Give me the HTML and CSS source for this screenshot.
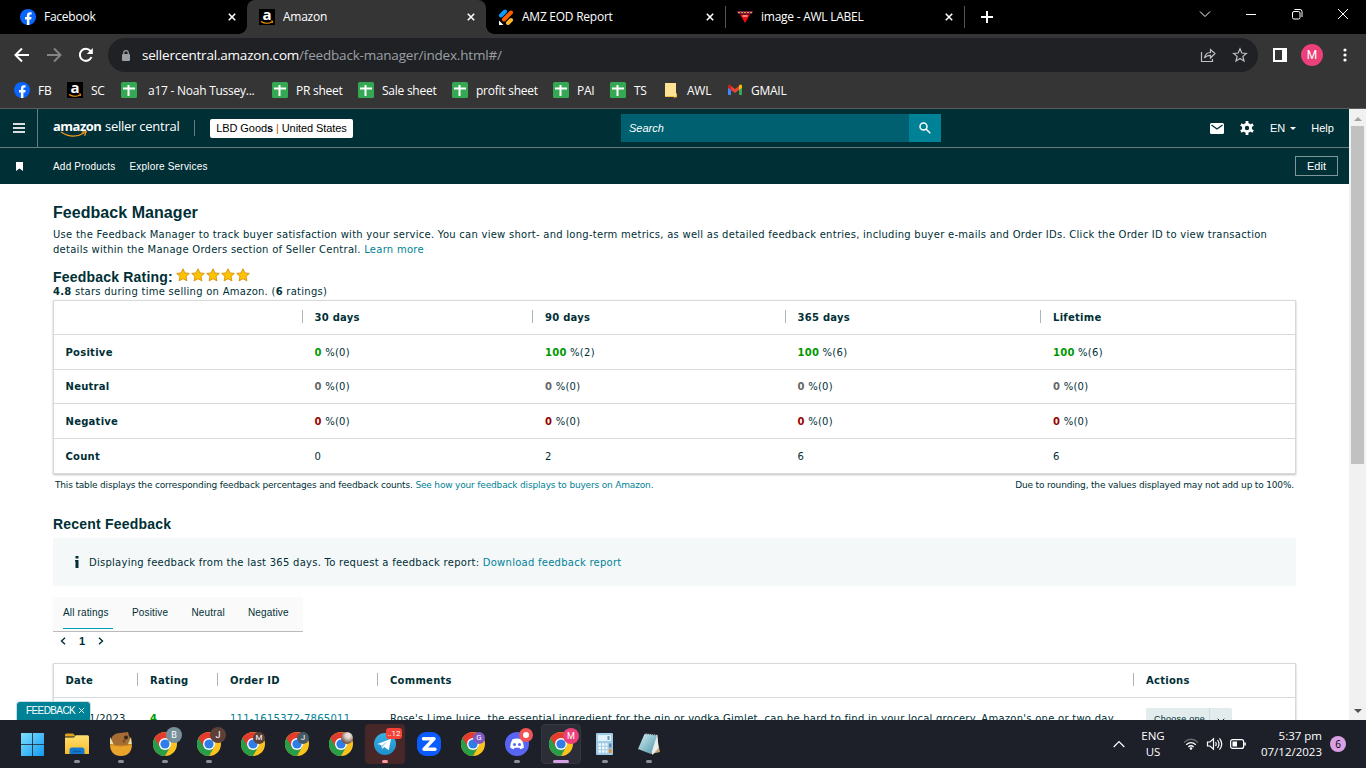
FILE: index.html
```
<!DOCTYPE html>
<html lang="en">

<head>
    <meta charset="utf-8">
    <title>Amazon</title>
    <link rel="stylesheet" href="styles.css">
</head>

<body>

    <!-- shared icons -->
    <svg class="defs" width="0" height="0">
        <defs>
            <linearGradient id="gWin" x1="0" y1="0" x2="1" y2="1">
                <stop offset="0" stop-color="#7fe0ff" />
                <stop offset="1" stop-color="#1399f0" />
            </linearGradient>
            <linearGradient id="gFolder" x1="0" y1="0" x2="0" y2="1">
                <stop offset="0" stop-color="#ffdf70" />
                <stop offset="1" stop-color="#f9bc2a" />
            </linearGradient>
            <linearGradient id="gNote" x1="0" y1="0" x2="1" y2="1">
                <stop offset="0" stop-color="#d5f0f4" />
                <stop offset="1" stop-color="#4b93a6" />
            </linearGradient>
            <linearGradient id="gTel" x1="0" y1="0" x2="0" y2="1">
                <stop offset="0" stop-color="#38b0e3" />
                <stop offset="1" stop-color="#1d8fcb" />
            </linearGradient>
        </defs>
        <symbol id="fb" viewBox="0 0 16 16">
            <circle cx="8" cy="8" r="8" fill="#0866ff" />
            <path d="M6.9 16V10.4H5V8h1.9V6.7c0-2.3 1.1-3.4 3.2-3.4.5 0 1.1.1 1.5.2v2.1h-1c-.9 0-1.2.4-1.2 1.300V8h2.200l-.4 2.400H9.400V16z" fill="#fff" />
        </symbol>
        <symbol id="amz" viewBox="0 0 16 16">
            <rect width="16" height="16" fill="#000" />
            <text x="8" y="10.6" text-anchor="middle" font-family="Open Sans, sans-serif" font-weight="700" font-size="15" fill="#fff">a</text>
            <path d="M2 12.4q5.500 3.400 11 .6" fill="none" stroke="#f90" stroke-width="1.2" />
            <path d="M11.800 12h2l-.5 2" fill="none" stroke="#f90" stroke-width=".9" />
        </symbol>
        <symbol id="sheet" viewBox="0 0 16 16">
            <rect width="16" height="16" rx="1.5" fill="#34a853" />
            <path d="M2 6.500h12M7.500 3v11" stroke="#fff" stroke-width="2" />
        </symbol>
        <symbol id="close" viewBox="0 0 8 8">
            <path d="M.8.800l6.400 6.400M7.200.800L.8 7.200" stroke="#fff" stroke-width="1.6" />
        </symbol>
        <symbol id="chrome" viewBox="0 0 24 24">
            <circle cx="12" cy="12" r="12" fill="#fcc31e" />
            <path d="M12 12L1.600 6A12 12 0 0 0 12 24L17.200 15z" fill="#2a9d48" />
            <path d="M6.800 15L1.600 6A12 12 0 0 1 22.400 6.500H12z" fill="#e33b2e" />
            <circle cx="12" cy="12" r="6" fill="#fff" />
            <circle cx="12" cy="12" r="4.6" fill="#2f7de9" />
        </symbol>
        <symbol id="star" viewBox="0 0 14 14">
            <path d="M7 .8l1.900 4.100 4.400.500-3.300 3 .9 4.500L7 10.700l-3.900 2.200.9-4.500-3.300-3 4.400-.500z" fill="#ffc400" stroke="#d58f0a" stroke-width=".9" />
        </symbol>
    </svg>

    <div class="tabs">
        <div class="tab">
            <svg class="fav"><use href="#fb" /></svg>
            <span class="tabTitle">Facebook</span>
            <svg class="x"><use href="#close" /></svg>
        </div>
        <div class="tab active">
            <svg class="fav"><use href="#amz" /></svg>
            <span class="tabTitle">Amazon</span>
            <svg class="x"><use href="#close" /></svg>
        </div>
        <div class="tab">
            <svg class="fav" viewBox="0 0 16 16">
                <path d="M3 6.500L7 2.500" stroke="#0a9bff" stroke-width="4" stroke-linecap="round" />
                <path d="M6 10.500L13 3.500" stroke="#ff6100" stroke-width="4" stroke-linecap="round" />
                <path d="M10 14l3-3" stroke="#ffb629" stroke-width="4" stroke-linecap="round" />
                <path d="M1 11.500V16h4.500z" fill="#fff" />
            </svg>
            <span class="tabTitle">AMZ EOD Report</span>
            <svg class="x"><use href="#close" /></svg>
        </div>
        <div class="tab last">
            <svg class="fav" viewBox="0 0 16 16">
                <path d="M0 2h16l-1 3H1z" fill="#7b2340" />
                <path d="M1 3.500h14" stroke="#d39a4a" stroke-dasharray="2 1" />
                <path d="M3 5.500h10L8 14z" fill="#f20d0d" />
                <path d="M5.500 7h5" stroke="#fff" />
            </svg>
            <span class="tabTitle">image - AWL LABEL</span>
            <svg class="x"><use href="#close" /></svg>
        </div>
        <svg class="plus" viewBox="0 0 12 12"><path d="M6 0v12M0 6h12" stroke="#fff" stroke-width="2" /></svg>
        <div class="winButtons">
            <svg viewBox="0 0 12 12"><path d="M1 3.500l5 5 5-5" /></svg>
            <svg viewBox="0 0 12 12"><path d="M1 6.500h10" /></svg>
            <svg viewBox="0 0 12 12"><rect x="1.5" y="3.5" width="7.5" height="7.5" rx="1.5" /><path d="M3.500 1.500H9a2 2 0 0 1 2 2V9" /></svg>
            <svg viewBox="0 0 12 12"><path d="M1 1l10 10M11 1L1 11" /></svg>
        </div>
    </div>

    <div class="toolbar">
        <svg class="nav" viewBox="0 0 16 16"><path d="M15 8H2M8 1.500L1.500 8 8 14.500" stroke="#fff" /></svg>
        <svg class="nav" viewBox="0 0 16 16"><path d="M1 8h13M8 1.500L14.500 8 8 14.500" stroke="#858585" /></svg>
        <svg class="nav" viewBox="0 0 16 16"><path d="M13.500 10A6 6 0 1 1 12.500 4l1 1.500" stroke="#fff" /><path d="M14.800 1v6H8.800z" fill="#fff" /></svg>
        <div class="omnibox">
            <svg class="lock" viewBox="0 0 8 11"><rect y="4" width="8" height="7" rx="1" fill="#9aa0a6" /><path d="M1.700 5V3a2.300 2.300 0 0 1 4.600 0v2" fill="none" stroke="#9aa0a6" stroke-width="1.2" /></svg>
            <span class="url"><b>sellercentral.amazon.com</b>/feedback-manager/index.html#/</span>
            <svg class="share" viewBox="0 0 16 16"><path d="M1.500 5v9.500h11V12M4.500 11c.5-3.500 2.500-5.500 6-5.500V2.500L15 6.500 10.500 11V8.300c-2.500 0-4.500.7-6 2.700z" /></svg>
            <svg class="fave" viewBox="0 0 16 16"><path d="M8 1.800l1.800 4.200 4.600.4-3.500 3 1.100 4.500L8 11.500l-4 2.400 1.100-4.500-3.500-3 4.600-.4z" /></svg>
        </div>
        <svg class="side" viewBox="0 0 14 14"><path d="M0 0h14v14H0zM2 2v10h7V2z" fill="#fff" fill-rule="evenodd" /></svg>
        <span class="profile">M</span>
        <svg class="dots" viewBox="0 0 4 14"><circle cx="2" cy="2" r="1.6" /><circle cx="2" cy="7" r="1.6" /><circle cx="2" cy="12" r="1.6" /></svg>
    </div>

    <div class="bookmarks">
        <span><svg><use href="#fb" /></svg>FB</span>
        <span><svg><use href="#amz" /></svg>SC</span>
        <span class="wide"><svg><use href="#sheet" /></svg>a17 - Noah Tussey...</span>
        <span><svg><use href="#sheet" /></svg>PR sheet</span>
        <span><svg><use href="#sheet" /></svg>Sale sheet</span>
        <span><svg><use href="#sheet" /></svg>profit sheet</span>
        <span><svg><use href="#sheet" /></svg>PAI</span>
        <span><svg><use href="#sheet" /></svg>TS</span>
        <span><svg viewBox="0 0 16 16"><path d="M2 1h11v10l1 1v3H2z" fill="#fde293" /><path d="M2 14.500h9M13.500 12v3h-3" stroke="#f0c040" fill="none" /></svg>AWL</span>
        <span><svg viewBox="0 0 16 16"><path d="M1 4v9h3V7z" fill="#4285f4" /><path d="M12 7v6h3V4z" fill="#34a853" /><path d="M4 4v4l4 3 4-3V4L8 7z" fill="#ea4335" /><path d="M1 4.500V4a1.500 1.500 0 0 1 3 0v4L1 5.800z" fill="#c5221f" /><path d="M15 4.500V4a1.500 1.500 0 0 0-3 0v4l3-2.200z" fill="#fbbc04" /></svg>GMAIL</span>
    </div>

    <div class="window">
        <div class="page">
            <div class="topbar">
                <div class="burger"><i></i><i></i><i></i></div>
                <div class="logo">
                    <b>amazon</b><span>seller central</span>
                    <svg class="smile" viewBox="0 0 30 7"><path d="M1 1q12 8 24 1" /><path d="M22.500 1l4.500-.3-1.500 4" /></svg>
                </div>
                <div class="account">LBD Good<b>s</b> <em>|</em> United States</div>
                <div class="search">
                    <span>Search</span>
                    <div class="go"><svg viewBox="0 0 12 12"><circle cx="4.5" cy="4.5" r="3.5" /><path d="M7 7l4.300 4.300" /></svg></div>
                </div>
                <svg class="mail" viewBox="0 0 14 11"><rect width="14" height="11" rx="1.5" fill="#fff" /><path d="M1.500 2L7 6l5.500-4" fill="none" stroke="#002f36" stroke-width="1.3" /></svg>
                <svg class="gear" viewBox="0 0 14 14"><circle cx="7" cy="7" r="3.6" /><path d="M7 0v3M7 11v3M.9 3.500l2.600 1.500M10.500 9l2.600 1.500M.9 10.500L3.500 9M10.500 5l2.600-1.500" /></svg>
                <span class="lang">EN</span><i class="caret"></i>
                <span class="help">Help</span>
            </div>
            <div class="subbar">
                <svg class="mark" viewBox="0 0 7 9"><path d="M0 0h7v9L3.500 6.500 0 9z" fill="#fff" /></svg>
                <span class="add">Add Products</span>
                <span class="explore">Explore Services</span>
                <span class="edit">Edit</span>
            </div>

            <div class="content">
                <h1>Feedback Manager</h1>
                <p class="intro">Use the Feedback Manager to track buyer satisfaction with your service. You can view short- and long-term metrics, as well as detailed feedback entries, including buyer e-mails and Order IDs. Click the Order ID to view transaction<br>details within the Manage Orders section of Seller Central. <a>Learn more</a></p>

                <div class="rating">
                    <h2>Feedback Rating:</h2>
                    <svg><use href="#star" /></svg><svg><use href="#star" /></svg><svg><use href="#star" /></svg><svg><use href="#star" /></svg><svg><use href="#star" /></svg>
                </div>
                <p class="stars"><b>4.8</b> stars during time selling on Amazon. (<b>6</b> ratings)</p>

                <div class="box summary">
                    <div class="row head"><span></span><span>30 days</span><span>90 days</span><span>365 days</span><span>Lifetime</span></div>
                    <div class="row pos"><strong>Positive</strong><span><b>0</b> %(0)</span><span><b>100</b> %(2)</span><span><b>100</b> %(6)</span><span><b>100</b> %(6)</span></div>
                    <div class="row neu"><strong>Neutral</strong><span><b>0</b> %(0)</span><span><b>0</b> %(0)</span><span><b>0</b> %(0)</span><span><b>0</b> %(0)</span></div>
                    <div class="row neg"><strong>Negative</strong><span><b>0</b> %(0)</span><span><b>0</b> %(0)</span><span><b>0</b> %(0)</span><span><b>0</b> %(0)</span></div>
                    <div class="row total"><strong>Count</strong><span>0</span><span>2</span><span>6</span><span>6</span></div>
                </div>
                <div class="notes">
                    <span>This table displays the corresponding feedback percentages and feedback counts. <a>See how your feedback displays to buyers on Amazon.</a></span>
                    <span>Due to rounding, the values displayed may not add up to 100%.</span>
                </div>

                <h2 class="recent">Recent Feedback</h2>
                <div class="info">
                    <svg viewBox="0 0 4 12"><path d="M.5 0h3v2.500h-3zM0 4h3.500v8H.5V5.500H0z" fill="#002f36" /></svg>
                    <span>Displaying feedback from the last 365 days. To request a feedback report: <a>Download feedback report</a></span>
                </div>

                <div class="filters">
                    <span class="on">All ratings</span><span>Positive</span><span>Neutral</span><span>Negative</span>
                </div>
                <div class="pager">
                    <svg viewBox="0 0 6 8"><path d="M5 .7L1.500 4 5 7.300" /></svg>
                    <span>1</span>
                    <svg viewBox="0 0 6 8"><path d="M1 .7L4.500 4 1 7.300" /></svg>
                </div>

                <div class="box entries">
                    <div class="row head"><span>Date</span><span>Rating</span><span>Order ID</span><span>Comments</span><span>Actions</span></div>
                    <div class="row"><span>11/21/2023</span><span class="score">4</span><span><a>111-1615372-7865011</a></span><span>Rose's Lime Juice, the essential ingredient for the gin or vodka Gimlet, can be hard to find in your local grocery. Amazon's one or two day</span>
                        <div class="choose"><span>Choose one</span><svg viewBox="0 0 8 5"><path d="M.7.700L4 4 7.300.700" /></svg></div>
                    </div>
                </div>
            </div>
            <div class="feedbackTag">FEEDBACK <svg viewBox="0 0 8 8"><path d="M1 1l6 6M7 1L1 7" stroke="#fff" /></svg></div>
        </div>
        <div class="scroll"><i class="up"></i><div class="thumb"></div><i class="down"></i></div>
    </div>

    <div class="taskbar">
        <div class="app"><svg viewBox="0 0 24 24"><path d="M0 1h11.200v11H0zM12 1h11v11H12zM0 12.800h11.200V24H0zM12 12.800h11V24H12z" fill="url(#gWin)" /></svg></div>
        <div class="app run"><svg viewBox="0 0 24 24"><path d="M0 3a1.500 1.500 0 0 1 1.500-1.500H8l3 3H0z" fill="#e0a31a" /><path d="M0 5.500h9l2-2.200h11.500A1.500 1.500 0 0 1 24 4.800V22H0z" fill="url(#gFolder)" /><path d="M4.500 22v-4a2.500 2.500 0 0 1 2.500-2.500h10a2.500 2.500 0 0 1 2.500 2.500v4z" fill="#137ad0" /><path d="M8 19.500h8" stroke="#0c5ba8" stroke-width="1.5" /></svg></div>
        <div class="app run"><svg viewBox="0 0 24 24"><path d="M2 14V9c0-5 4-8 9-8l8-1 1 4c2 2 2 5 2 10z" fill="#a56c33" /><path d="M1 5l4 8H1zM22 5l1 8-4-1z" fill="#e9e2a5" /><circle cx="17" cy="5.500" r="2" fill="#3b241a" /><circle cx="15" cy="9" r="1.500" fill="#7b4a26" /><path d="M1 12q11 3 22 0c0 8-4 12-11 12S1 20 1 12z" fill="#e9a52b" /><path d="M1 12.500q11 3 22 0" fill="none" stroke="#c47d1c" /></svg></div>
        <div class="app run"><svg><use href="#chrome" /></svg><em class="big slate">B</em></div>
        <div class="app run"><svg><use href="#chrome" /></svg><em class="big brown">J</em></div>
        <div class="app"><svg><use href="#chrome" /></svg><em class="brown">M</em></div>
        <div class="app"><svg><use href="#chrome" /></svg><em class="dark">J</em></div>
        <div class="app"><svg><use href="#chrome" /></svg><em class="photo"></em></div>
        <div class="app run alert"><svg viewBox="0 0 24 24"><circle cx="12" cy="12" r="11" fill="url(#gTel)" /><path d="M4.500 12L18 6.800l-2.200 11.500-4.500-3.300-2.300 2-.5-3.800z" fill="#fff" /><path d="M8.500 13.500l6-4.500-4.500 5.500-.9 2.500z" fill="#a9d5ee" /></svg><em class="count">..12</em></div>
        <div class="app"><svg viewBox="0 0 24 24"><rect width="24" height="24" rx="9" fill="#0b5cff" /><path d="M6.500 6.800h10.500L7 17.200h11" fill="none" stroke="#fff" stroke-width="3.4" stroke-linejoin="round" stroke-linecap="round" /></svg></div>
        <div class="app"><svg><use href="#chrome" /></svg><em class="violet">G</em></div>
        <div class="app run"><svg viewBox="0 0 24 24"><circle cx="12" cy="12" r="12" fill="#5865f2" /><path d="M7.500 7.200Q12 6 16.500 7.200q2.500 4 2.400 8.300-1.500 1.200-3.500 1.700l-1-1.500h-4.800l-1 1.500q-2-.5-3.500-1.700 0-4.300 2.400-8.300z" fill="#fff" /><circle cx="9.500" cy="12.500" r="1.500" fill="#5865f2" /><circle cx="14.500" cy="12.500" r="1.500" fill="#5865f2" /></svg><em class="rec"></em></div>
        <div class="app run current"><svg><use href="#chrome" /></svg><em class="big pink">M</em></div>
        <div class="app run"><svg viewBox="0 0 24 24"><rect x="3" y="1" width="17" height="22" rx="1" fill="#9fcbe6" /><rect x="5" y="3" width="13" height="6" fill="#e2f2fb" /><path d="M14.500 4h2v4h-2z" fill="#7595b0" /><path d="M5.500 12.500h9M5.500 16h9M5.500 19.500h9" stroke="#f3fafd" stroke-width="2.4" stroke-dasharray="2.5 1" /><path d="M16 11.500h2.500v4H16z" fill="#5f88a8" /><path d="M16 17h2.500v4H16z" fill="#e58b32" /></svg></div>
        <div class="app run"><svg viewBox="0 0 24 24"><path d="M19 2l4 18-9 2z" fill="#c9a77a" /><path d="M8 1.500L20.500 3 21.500 16l-6 7z" fill="#e8eeee" /><path d="M7.500 2L20 3.500 14 22 1 17z" fill="url(#gNote)" /><path d="M8 1.500l12 1.500" stroke="#39434a" stroke-width="1.5" stroke-dasharray="1 1" /></svg></div>

        <div class="tray">
            <svg class="chev" viewBox="0 0 12 8"><path d="M.7 7L6 1.500 11.300 7" /></svg>
            <span class="kb">ENG<br>US</span>
            <svg class="wifi" viewBox="0 0 16 12"><path d="M1 4.500q7-6.500 14 0" stroke="#666b72" /><path d="M3.200 6.800q4.800-4.500 9.600 0M5.300 9q2.700-2.500 5.400 0" /><circle cx="8" cy="10.500" r="1.300" fill="#fff" stroke="none" /></svg>
            <svg class="vol" viewBox="0 0 16 14"><path d="M1 5h2.500L7 1.800v10.400L3.500 9H1zM9 5q1.500 2 0 4M11 3q3 4 0 8M13 1.300q4.500 5.700 0 11.400" /></svg>
            <svg class="bat" viewBox="0 0 16 10"><rect x=".6" y=".6" width="13" height="8.8" rx="2" /><rect x="2.5" y="2.5" width="4.5" height="5" fill="#fff" stroke="none" /><path d="M15 3.500v3" stroke-width="1.6" /></svg>
            <span class="clock">5:37 pm<br>07/12/2023</span>
            <span class="badge">6</span>
        </div>
    </div>

</body>

</html>
```
FILE: styles.css
```
* {
    box-sizing: border-box;
}

body {
    margin: 0;
    width: 1366px;
    height: 768px;
    overflow: hidden;
    display: flex;
    flex-direction: column;
    background: #fff;
    font-family: "Open Sans", "Noto Sans", sans-serif;
    font-size: 12px;
}

svg {
    display: block;
    flex: none;
}

.defs {
    position: absolute;
}

h1, h2, p {
    margin: 0;
}

em, i {
    font-style: normal;
}

/* browser tabs */
.tabs {
    display: flex;
    height: 34px;
    background: #000;
    color: #fff;
}

.tab {
    width: 239px;
    height: 34px;
    padding: 0 11px 0 12px;
    display: flex;
    align-items: center;
}

.tab:first-child {
    width: 247px;
    padding-left: 20px;
}

.tab.active {
    position: relative;
    background: #353535;
    border-radius: 8px 8px 0 0;
}

.tab.active::before, .tab.active::after {
    content: "";
    position: absolute;
    left: -8px;
    bottom: 0;
    width: 8px;
    height: 8px;
    background: radial-gradient(circle at 0 0, transparent 7.5px, #353535 8px);
}

.tab.active::after {
    left: auto;
    right: -8px;
    background: radial-gradient(circle at 100% 0, transparent 7.5px, #353535 8px);
}

.tab.last {
    width: 240px;
    border-left: 1px solid #444;
    border-right: 1px solid #444;
    border-image: linear-gradient(transparent 7px, #555 7px, #555 27px, transparent 27px) 1;
    padding-left: 11px;
}

.fav {
    width: 16px;
    height: 16px;
    margin-right: 8px;
}

.tabTitle {
    flex: 1;
    line-height: 34px;
    letter-spacing: -0.25px;
}

.x {
    width: 8px;
    height: 8px;
}

.plus {
    width: 12px;
    height: 12px;
    margin: 11px 0 0 16px;
}

.winButtons {
    display: flex;
    gap: 34px;
    margin: 8px 0 0 auto;
    padding-right: 17px;
}

.winButtons svg {
    width: 12px;
    height: 12px;
    fill: none;
    stroke: #fff;
}

/* address bar */
.toolbar {
    display: flex;
    align-items: center;
    height: 42px;
    padding-left: 14px;
    background: #353535;
}

.nav {
    width: 16px;
    height: 16px;
    margin-right: 16px;
    fill: none;
    stroke-width: 2;
}

.omnibox {
    display: flex;
    align-items: center;
    width: 1150px;
    height: 34px;
    margin-left: -2px;
    padding-left: 14px;
    border-radius: 17px;
    background: #202124;
    color: #9aa0a6;
}

.lock {
    width: 8px;
    height: 11px;
}

.url {
    flex: 1;
    margin-left: 12px;
    font-size: 13.5px;
    letter-spacing: -0.2px;
}

.url b {
    font-weight: 400;
    color: #fff;
}

.share, .fave {
    width: 16px;
    height: 16px;
    margin-right: 16px;
    fill: none;
    stroke: #bdc1c6;
    stroke-width: 1.2;
}

.fave {
    margin-right: 10px;
}

.side {
    width: 14px;
    height: 14px;
    margin-left: 15px;
}

.profile {
    width: 22px;
    height: 22px;
    margin-left: 14px;
    border-radius: 50%;
    background: #ec407a;
    color: #fff;
    font: 12px/22px Roboto, sans-serif;
    text-align: center;
}

.dots {
    width: 4px;
    height: 14px;
    margin-left: 20px;
    fill: #fff;
}

.bookmarks {
    display: grid;
    grid-template-columns: 53px 54px 151px 86px 94px 101px 57px 53px 64px 100px;
    height: 33px;
    padding: 0 0 4px 14px;
    background: #353535;
    border-bottom: 1px solid #5c5c5c;
    color: #fff;
    letter-spacing: -0.25px;
}

.bookmarks span {
    display: flex;
    align-items: center;
    white-space: nowrap;
}

.bookmarks svg {
    width: 16px;
    height: 16px;
    margin-right: 8px;
}

.bookmarks .wide svg {
    margin-right: 11px;
}

/* seller central */
.window {
    display: flex;
    height: 611px;
}

.page {
    position: relative;
    width: 1349px;
    overflow: hidden;
    font-family: "DejaVu Sans", sans-serif;
    font-size: 10px;
    letter-spacing: 0.26px;
    color: #002f36;
}

.page a {
    color: #008296;
}

.topbar {
    display: flex;
    align-items: center;
    height: 39px;
    background: #002f36;
    border-bottom: 1px solid #687c7e;
    color: #fff;
    font: 12px "Liberation Sans", Arial, sans-serif;
    letter-spacing: 0;
}

.burger {
    display: flex;
    flex-direction: column;
    justify-content: center;
    gap: 2px;
    width: 38px;
    height: 38px;
    padding-left: 13px;
    border-right: 1px solid #687c7e;
}

.burger i {
    width: 12px;
    height: 2px;
    background: #d9e0e1;
}

.logo {
    position: relative;
    display: flex;
    width: 142px;
    height: 16px;
    margin-left: 15px;
    border-right: 1px solid #687c7e;
    font: 13px/13px "Open Sans", sans-serif;
    letter-spacing: -0.25px;
    white-space: nowrap;
}

.logo b {
    width: 52px;
    letter-spacing: -0.5px;
}

.smile {
    position: absolute;
    left: 7px;
    top: 11px;
    width: 29px;
    height: 7px;
    fill: none;
    stroke: #f59a23;
    stroke-width: 1.3;
}

.account {
    width: 143px;
    height: 19px;
    margin-left: 15px;
    border-radius: 2px;
    background: #fff;
    color: #000;
    line-height: 19px;
    text-align: center;
    font-size: 11px;
    letter-spacing: -0.08px;
    white-space: nowrap;
}

.account em {
    color: #c45500;
}

.search {
    display: flex;
    width: 320px;
    height: 28px;
    margin-left: 268px;
    background: #00606f;
    font-size: 11px;
    font-style: italic;
    line-height: 28px;
}

.search span {
    flex: 1;
    padding-left: 8px;
}

.go {
    width: 32px;
    padding: 8px 10px;
    background: #008296;
}

.go svg {
    width: 12px;
    height: 12px;
    fill: none;
    stroke: #fff;
    stroke-width: 1.5;
}

.mail {
    width: 14px;
    height: 11px;
    margin-left: 269px;
}

.gear {
    width: 14px;
    height: 14px;
    margin: 0 16px;
    fill: none;
    stroke: #fff;
    stroke-width: 2.8;
}

.lang, .help {
    font-size: 11px;
}

.caret {
    margin: 1px 15px 0 5px;
    border: 3.5px solid transparent;
    border-top-color: #fff;
    border-bottom: 0;
}

.subbar {
    display: flex;
    align-items: center;
    height: 36px;
    padding: 0 11px 0 16px;
    background: #002f36;
    color: #fff;
    font: 10px "Liberation Sans", Arial, sans-serif;
    letter-spacing: 0.2px;
}

.mark {
    width: 7px;
    height: 9px;
}

.add {
    margin: 1px 14px 0 30px;
}

.explore {
    margin-top: 1px;
}

.edit {
    width: 43px;
    height: 20px;
    margin-left: auto;
    border: 1px solid #7d9699;
    line-height: 18px;
    text-align: center;
    font-size: 11px;
    letter-spacing: 0;
}

.content {
    padding: 19px 53px 0;
}

h1, h2 {
    font-family: "Liberation Sans", Arial, sans-serif;
    font-weight: 700;
    letter-spacing: 0.2px;
}

h1 {
    height: 24px;
    font-size: 16px;
    line-height: 19px;
    letter-spacing: 0.05px;
}

.intro {
    height: 41px;
    line-height: 15px;
    white-space: nowrap;
}

.rating {
    display: flex;
    height: 17px;
}

h2 {
    font-size: 14px;
    line-height: 18px;
}

.rating h2 {
    width: 123px;
}

.rating svg {
    width: 14px;
    height: 14px;
    margin-right: 1px;
}

.stars {
    height: 15px;
    line-height: 14px;
}

.box {
    width: 1243px;
    border: 1px solid #d5dbdb;
    box-shadow: 0 1px 2px rgba(0, 0, 0, 0.25);
    background: #fff;
}

.row {
    display: grid;
    height: 35px;
    padding-left: 11.5px;
    border-bottom: 1px solid #d5dbdb;
    line-height: 35px;
    white-space: nowrap;
}

.row:last-child {
    border-bottom: 0;
}

.summary .row {
    grid-template-columns: 249px 230.500px 252.500px 255.500px 1fr;
}

.summary .head, .summary .neu, .summary .total {
    height: 34px;
    line-height: 33px;
}

.summary .total {
    line-height: 35px;
}

.entries .row {
    grid-template-columns: 84.500px 80px 160px 756px 1fr;
}

.head {
    height: 34px;
    font-weight: 700;
}

.head span + span {
    position: relative;
}

.head span + span::before {
    content: "";
    position: absolute;
    left: -13px;
    top: 9px;
    width: 1px;
    height: 13px;
    background: #aab7b8;
}

.pos b, .score {
    color: #090;
}

.neu b {
    color: #666;
}

.neg b {
    color: #900;
}

.notes {
    display: flex;
    justify-content: space-between;
    height: 40px;
    padding: 4px 2px 0;
    font-size: 9px;
    line-height: 14px;
    letter-spacing: -0.17px;
}

.recent {
    height: 24px;
    line-height: 20px;
}

.info {
    display: flex;
    align-items: center;
    height: 48px;
    padding-left: 22px;
    background: #f4f8f9;
}

.info svg {
    width: 4px;
    height: 12px;
    margin-right: 10px;
}

.filters {
    display: grid;
    grid-template-columns: 69px 59.500px 56.500px 50px;
    width: 250px;
    height: 35px;
    margin-top: 11px;
    padding-left: 10px;
    background: #fafafa;
    border-bottom: 1px solid #bbb;
    font: 10px/32px "Liberation Sans", Arial, sans-serif;
    letter-spacing: 0.15px;
}

.filters .on {
    width: 50px;
    height: 32px;
    border-bottom: 1px solid #00a1b7;
}

.pager {
    display: flex;
    align-items: center;
    height: 31px;
    padding: 0 0 13px 7px;
    font: 700 11px "Liberation Sans", Arial, sans-serif;
}

.pager svg {
    width: 6px;
    height: 8px;
    fill: none;
    stroke: #002f36;
    stroke-width: 1.4;
}

.pager span {
    width: 6px;
    margin: 0 13px;
}

.entries .row {
    height: 60px;
    line-height: 41px;
}

.entries .head {
    height: 34px;
    line-height: 33px;
}

.score {
    font-weight: 700;
}

.choose {
    display: flex;
    align-items: center;
    width: 86px;
    height: 24px;
    margin-top: 10px;
    background: #e3eced;
    border-radius: 2px;
    font: 9px/20px "Liberation Sans", Arial, sans-serif;
}

.choose span {
    width: 64px;
    height: 24px;
    padding-left: 8px;
    border-right: 1px solid #cfdadb;
    line-height: 22px;
}

.choose svg {
    width: 8px;
    height: 5px;
    margin-left: 7px;
    fill: none;
    stroke: #002f36;
}

.feedbackTag {
    position: absolute;
    left: 16px;
    bottom: -4px;
    display: flex;
    align-items: center;
    width: 75px;
    height: 23px;
    padding: 0 0 4px 9px;
    background: #008296;
    border: 1px solid #c9dfe2;
    border-radius: 4px;
    color: #fff;
    font: 10px "Liberation Sans", Arial, sans-serif;
    letter-spacing: -0.6px;
}

.feedbackTag svg {
    width: 7px;
    height: 7px;
    margin-left: 3px;
}

/* scrollbar */
.scroll {
    display: flex;
    flex-direction: column;
    align-items: center;
    width: 17px;
    background: #f1f1f1;
}

.thumb {
    width: 13px;
    height: 338px;
    margin-top: 5px;
    background: #c1c1c1;
}

.up, .down {
    border: 4px solid transparent;
}

.up {
    margin-top: 8px;
    border-top: 0;
    border-bottom-color: #a3a3a3;
}

.down {
    margin: auto 0 7px;
    border-bottom: 0;
    border-top-color: #505050;
}

/* windows taskbar */
.taskbar {
    display: flex;
    height: 48px;
    padding-left: 11px;
    background: #1d2029;
    color: #fff;
}

.app {
    position: relative;
    width: 40px;
    height: 40px;
    margin: 4px 2px;
    padding: 8px;
    border-radius: 4px;
}

.app svg {
    width: 24px;
    height: 24px;
}

.app em {
    position: absolute;
    left: 20px;
    top: 8px;
    width: 12px;
    height: 12px;
    border-radius: 50%;
    font: 8px/12px Roboto, sans-serif;
    text-align: center;
}

.app .big {
    left: 21px;
    top: 3px;
    width: 16px;
    height: 16px;
    font-size: 9px;
    line-height: 16px;
}

.slate { background: #78909c; }
.brown { background: #5d4037; }
.dark { background: #455a64; }
.violet { background: #7e57c2; }
.pink { background: #ec407a; }

.photo {
    background: radial-gradient(circle at 60% 30%, #e9dcd5 20%, #755649 70%);
}

.app .count {
    left: 21px;
    top: 4px;
    width: 16px;
    height: 11px;
    border-radius: 3px;
    background: #f44336;
    font-size: 8px;
    line-height: 11px;
}

.app .rec {
    top: 4px;
    left: 22px;
    width: 14px;
    height: 14px;
    background: #fff;
    border: 4px solid #f05454;
}

.run::after {
    content: "";
    position: absolute;
    left: 17px;
    bottom: 1px;
    width: 6px;
    height: 3px;
    border-radius: 2px;
    background: #8d9096;
}

.alert {
    background: #482729;
}

.alert::after {
    background: #ff99a0;
}

.current {
    background: #2b2e36;
    border: 1px solid #343740;
    padding: 7px;
}

.current::after {
    left: 11px;
    bottom: 0;
    width: 16px;
    background: #d5a0e5;
}

.tray {
    display: flex;
    align-items: center;
    margin-left: auto;
    padding-right: 20px;
    line-height: 16px;
}

.tray svg {
    fill: none;
    stroke: #fff;
    stroke-width: 1.2;
}

.chev {
    width: 12px;
    height: 8px;
}

.kb {
    width: 24px;
    margin: 0 18px 0 16px;
    text-align: center;
    font-size: 11.5px;
}

.wifi {
    width: 16px;
    height: 12px;
}

.vol {
    width: 17px;
    height: 14px;
    margin: 0 7px;
}

.bat {
    width: 16px;
    height: 10px;
}

.clock {
    width: 76px;
    text-align: right;
    font-size: 11.5px;
}

.badge {
    width: 16px;
    height: 16px;
    margin-left: 8px;
    border-radius: 50%;
    background: #d9a0e6;
    color: #000;
    font-size: 10px;
    text-align: center;
}
```
